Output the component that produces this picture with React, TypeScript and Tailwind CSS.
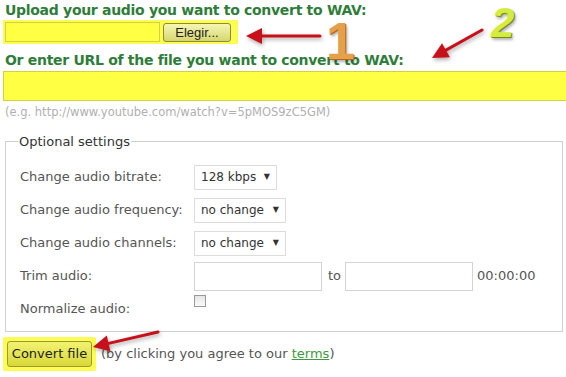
import { ReactNode } from 'react';

const font = { fontFamily: '"DejaVu Sans", Verdana, sans-serif' };

const Select = ({ value, width }: { value: string; width: string }) => (
  <div className={`flex items-center justify-between h-[25px] border border-[#dcdcdc] bg-white pl-[6px] pr-[6px] text-[12px] text-[#333] ${width}`}>
    <span>{value}</span>
    <span className="text-[8px] text-[#333]">▼</span>
  </div>
);

const Row = ({ label, children }: { label: string; children: ReactNode }) => (
  <div className="flex items-center h-[33px]">
    <div className="w-[174px] shrink-0 text-[13px] text-[#555]">{label}</div>
    {children}
  </div>
);

const Arrow = ({ x1, y1, x2, y2 }: { x1: number; y1: number; x2: number; y2: number }) => {
  const ang = Math.atan2(y2 - y1, x2 - x1);
  const len = 16;
  const w = 8;
  const bx = x2 - Math.cos(ang) * len;
  const by = y2 - Math.sin(ang) * len;
  const px = -Math.sin(ang) * w;
  const py = Math.cos(ang) * w;
  return (
    <g style={{ filter: 'drop-shadow(1px 2px 2px rgba(0,0,0,0.35))' }}>
      <line x1={x1} y1={y1} x2={bx} y2={by} stroke="#c8101a" strokeWidth="3" strokeLinecap="round" />
      <polygon points={`${x2},${y2} ${bx + px},${by + py} ${bx - px},${by - py}`} fill="#c8101a" />
    </g>
  );
};

export default function App() {
  return (
    <div className="relative w-[566px] h-[377px] overflow-hidden bg-white" style={font}>
      <div className="pl-[5px] pt-[2px]">
        <h1 className="text-[14px] font-bold text-[#2f7d3a] leading-[16px] tracking-[-0.3px]">
          Upload your audio you want to convert to WAV:
        </h1>
        <div className="mt-[2px] -ml-[2px] flex items-center gap-[3px] w-[235px] h-[24px] bg-[#fcfc52] px-[2px]">
          <div className="w-[155px] h-[20px] bg-[#ffff44] border border-[#d2d23c]" />
          <button className="w-[68px] h-[19px] rounded-[3px] border border-[#8c8c30] bg-gradient-to-b from-[#f6f6b4] to-[#d6d670] text-[13px] text-[#222] leading-none" style={{ fontFamily: '"Liberation Sans", Arial, sans-serif' }}>
            Elegir...
          </button>
        </div>
        <h2 className="mt-[8px] text-[14px] font-bold text-[#2f7d3a] leading-[16px] tracking-[-0.3px]">
          Or enter URL of the file you want to convert to WAV:
        </h2>
        <div className="mt-[3px] -ml-[2px] h-[30px] w-[600px] bg-[#ffff44] border border-[#d2d23c]" />
        <p className="mt-[4px] text-[11.5px] text-[#b0b0b0] leading-[14px]">(e.g. http://www.youtube.com/watch?v=5pMOS9zC5GM)</p>
      </div>

      <fieldset className="mx-[5px] mt-[13px] w-[558px] h-[200px] border border-[#cfcfcf] pl-[14px] pt-[9px]">
        <legend className="-ml-[2px] px-[1px] text-[13px] text-[#333]">Optional settings</legend>
        <Row label="Change audio bitrate:">
          <Select value="128 kbps" width="w-[83px]" />
        </Row>
        <Row label="Change audio frequency:">
          <Select value="no change" width="w-[92px]" />
        </Row>
        <Row label="Change audio channels:">
          <Select value="no change" width="w-[92px]" />
        </Row>
        <Row label="Trim audio:">
          <div className="w-[128px] h-[29px] border border-[#d4d4d4] bg-white" />
          <span className="ml-[6px] text-[13px] text-[#555]">to</span>
          <div className="ml-[4px] w-[128px] h-[29px] border border-[#d4d4d4] bg-white" />
          <span className="ml-[4px] text-[13px] text-[#555]">00:00:00</span>
        </Row>
        <Row label="Normalize audio:">
          <div className="self-start mt-[2px] w-[12px] h-[12px] border border-[#9a9a9a] bg-gradient-to-b from-[#e6e6e6] to-[#fafafa]" />
        </Row>
      </fieldset>

      <div className="mt-[5px] flex items-center">
        <div className="ml-[3px] w-[93px] h-[34px] bg-[#fcfc52] flex items-center justify-center rounded-[2px]">
          <button className="w-[85px] h-[26px] rounded-[3px] border border-[#9a9a30] bg-gradient-to-b from-[#f2f270] to-[#d8d838] text-[13px] text-[#222]" style={{ fontFamily: 'Tahoma, "DejaVu Sans", sans-serif' }}>
            Convert file
          </button>
        </div>
        <p className="ml-[5px] text-[13px] text-[#555]">
          (by clicking you agree to our <a href="#" className="text-[#3d9a3d] underline">terms</a>)
        </p>
      </div>

      <svg className="absolute inset-0 pointer-events-none" width="566" height="377">
        <Arrow x1={320} y1={36} x2={246} y2={36} />
        <Arrow x1={482} y1={30} x2={432} y2={58} />
        <Arrow x1={158} y1={332} x2={93} y2={347} />
      </svg>
      <span className="absolute left-[326px] top-[15px] text-[52px] font-bold text-[#e6a04a] leading-none" style={{ fontFamily: '"Liberation Sans", Arial, sans-serif', textShadow: '1px 1px 0 #b06a20, 2px 3px 3px rgba(0,0,0,0.3)' }}>1</span>
      <span className="absolute left-[491px] top-[2px] text-[42px] font-bold italic text-[#d4ec40] leading-none" style={{ fontFamily: '"Liberation Sans", Arial, sans-serif', textShadow: '1px 1px 0 #7a8a10, 2px 3px 3px rgba(0,0,0,0.3)' }}>2</span>
    </div>
  );
}
